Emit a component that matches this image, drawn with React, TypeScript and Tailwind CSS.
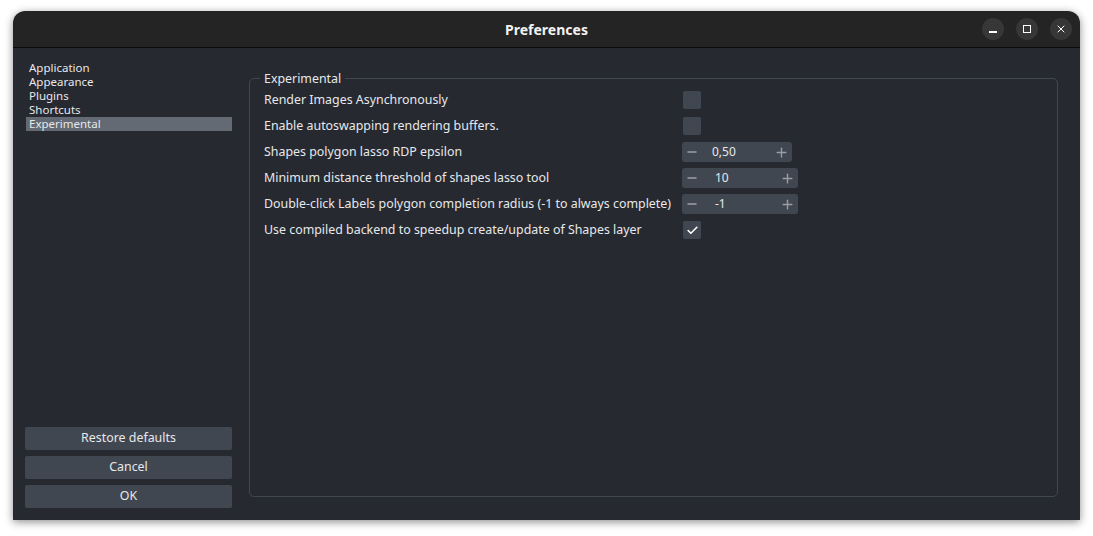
import React from 'react';
import { Minus, Plus, Check, X } from 'lucide-react';

const NAV = ['Application', 'Appearance', 'Plugins', 'Shortcuts', 'Experimental'];

type Row =
    | { label: string; kind: 'check'; checked: boolean }
    | { label: string; kind: 'spin'; value: string; wide: boolean };

const ROWS: Row[] = [
    { label: 'Render Images Asynchronously', kind: 'check', checked: false },
    { label: 'Enable autoswapping rendering buffers.', kind: 'check', checked: false },
    { label: 'Shapes polygon lasso RDP epsilon', kind: 'spin', value: '0,50', wide: false },
    { label: 'Minimum distance threshold of shapes lasso tool', kind: 'spin', value: '10', wide: true },
    { label: 'Double-click Labels polygon completion radius (-1 to always complete)', kind: 'spin', value: '-1', wide: true },
    { label: 'Use compiled backend to speedup create/update of Shapes layer', kind: 'check', checked: true },
];

const SpinBox: React.FC<{ value: string; wide: boolean }> = ({ value, wide }) => (
    <div className={`flex items-center h-[20px] rounded-[3px] bg-[#414750] ${wide ? 'w-[116px]' : 'w-[110px]'}`}>
        <Minus size={14} strokeWidth={2.2} className="ml-[3px] text-[#9a9fa6]" />
        <span className={`${wide ? 'ml-[16px]' : 'ml-[13px]'} text-[#e6e8eb] text-[12px] flex-1`}>{value}</span>
        <Plus size={15} strokeWidth={2.2} className="mr-[3px] text-[#9a9fa6]" />
    </div>
);

const App: React.FC = () => {
    return (
        <div className="w-[1093px] h-[536px] bg-white pt-[11px] pl-[13px]" style={{ fontFamily: '"Noto Sans", sans-serif' }}>
            <div className="w-[1067px] h-[509px] rounded-t-[12px] overflow-hidden flex flex-col shadow-[0_2px_8px_rgba(0,0,0,0.45)]">
                {/* Title bar */}
                <div className="h-[37px] bg-[#242424] border-b border-[#0b0b0b] flex items-center relative">
                    <div className="flex-1 text-center text-[#f2f2f2] text-[14px] font-bold">Preferences</div>
                    <div className="absolute right-[8px] top-[7px] flex gap-[12px]">
                        <div className="w-[22px] h-[22px] rounded-full bg-[#373737] flex items-center justify-center">
                            <div className="w-[8px] h-[1.5px] bg-white mt-[6px]" />
                        </div>
                        <div className="w-[22px] h-[22px] rounded-full bg-[#373737] flex items-center justify-center">
                            <div className="w-[8px] h-[8px] border border-white" />
                        </div>
                        <div className="w-[22px] h-[22px] rounded-full bg-[#373737] flex items-center justify-center">
                            <X size={12} strokeWidth={2} className="text-white" />
                        </div>
                    </div>
                </div>

                {/* Body */}
                <div className="flex-1 bg-[#262930] flex text-[12.4px] text-[#e6e8eb]">
                    <div className="w-[236px] pl-[12px] pt-[13px] pb-[12px] flex flex-col">
                        <div className="w-[206px] ml-[1px] flex flex-col">
                            {NAV.map(n => (
                                <div key={n} className={`h-[14px] leading-[14px] pl-[3px] text-[11.5px] ${n === 'Experimental' ? 'bg-[#646a73]' : ''}`}>{n}</div>
                            ))}
                        </div>
                        <div className="flex-1" />
                        <div className="flex flex-col gap-[6px] w-[207px]">
                            {['Restore defaults', 'Cancel', 'OK'].map(b => (
                                <div key={b} className="h-[23px] rounded-[2px] bg-[#414750] flex items-center justify-center text-[12.4px]">{b}</div>
                            ))}
                        </div>
                    </div>

                    <div className="flex-1 pt-[30px] pl-[0px] pr-[22px] pb-[23px]">
                        <div className="relative h-full border border-[#414750] rounded-[5px] pt-[8px] pl-[14px]">
                            <div className="absolute -top-[9px] left-[10px] px-[4px] bg-[#262930] text-[12.4px] leading-[18px]">Experimental</div>
                            <div className="flex flex-col">
                                {ROWS.map(r => (
                                    <div key={r.label} className="h-[26px] flex items-center">
                                        <div className="w-[418px] whitespace-nowrap">{r.label}</div>
                                        {r.kind === 'check' ? (
                                            <div className="w-[18px] h-[18px] ml-[1px] rounded-[2px] bg-[#414750] flex items-center justify-center">
                                                {r.checked && <Check size={13} strokeWidth={3} className="text-white" />}
                                            </div>
                                        ) : (
                                            <SpinBox value={r.value} wide={r.wide} />
                                        )}
                                    </div>
                                ))}
                            </div>
                        </div>
                    </div>
                </div>
            </div>
        </div>
    );
};

export default App;
